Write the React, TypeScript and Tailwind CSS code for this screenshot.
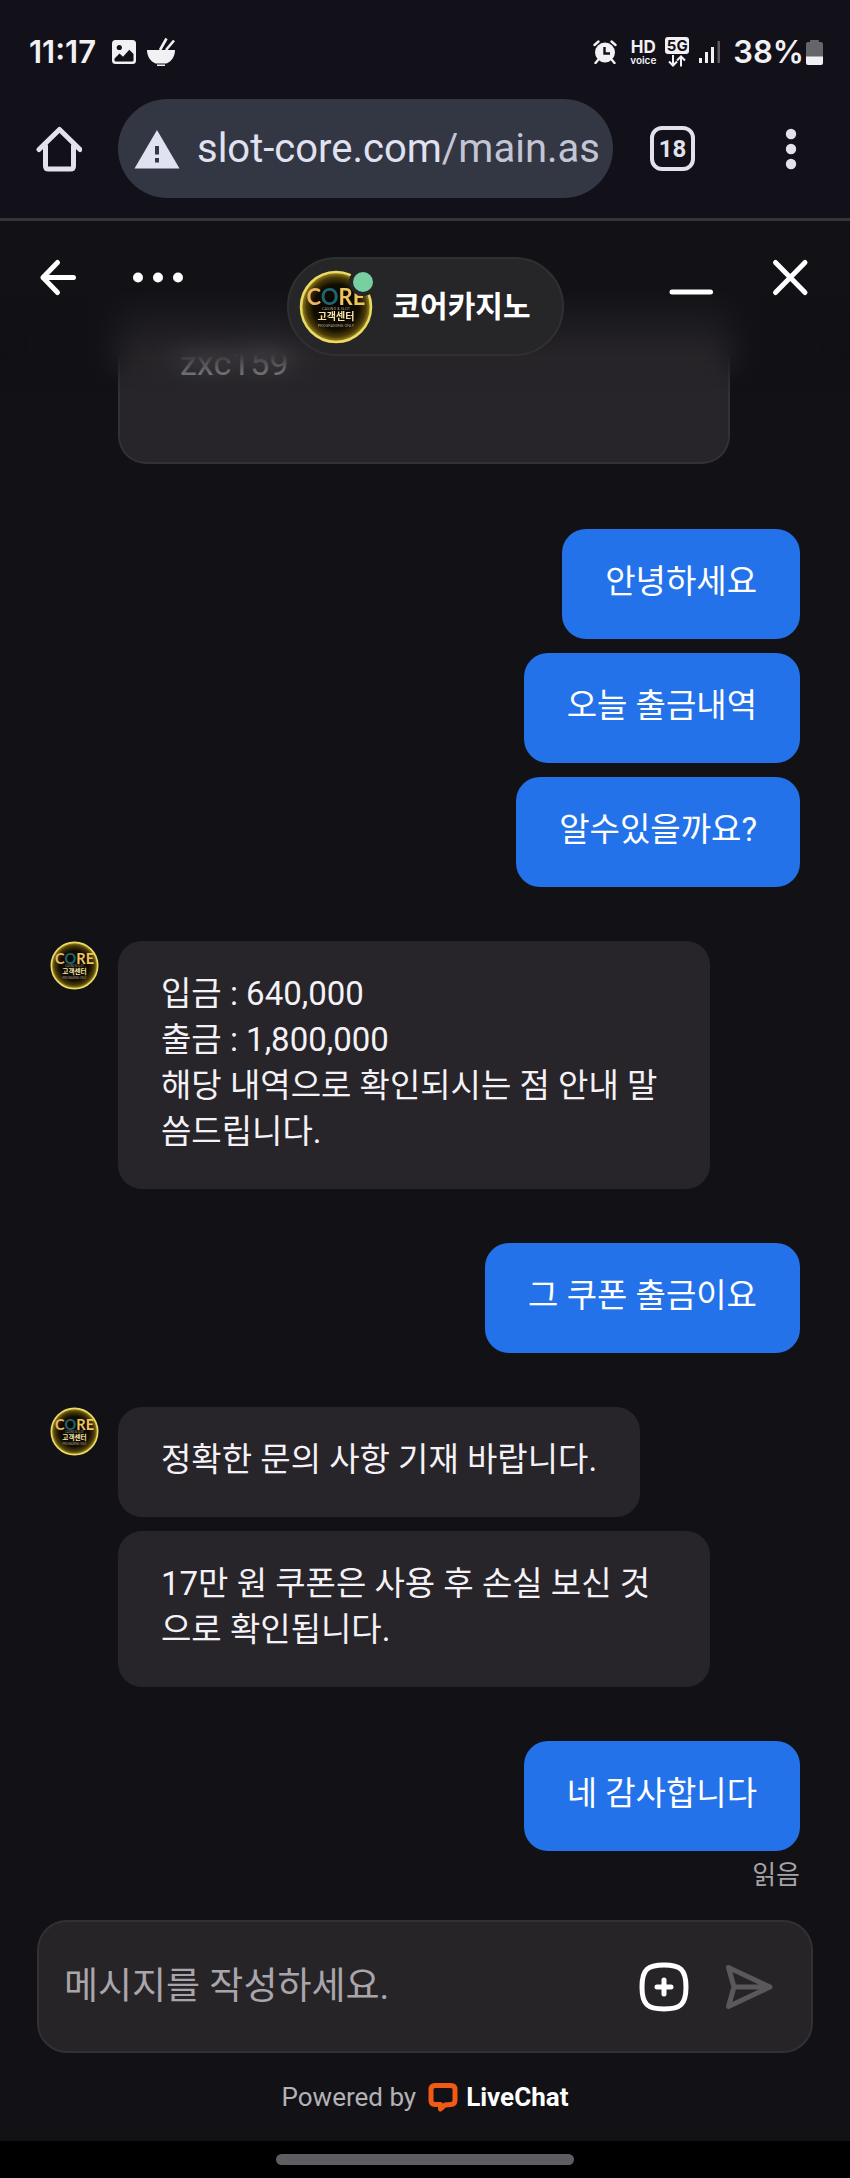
import { ReactNode } from "react";

interface MessageGroup {
  from: "agent" | "me";
  messages: string[];
}

const groups: MessageGroup[] = [
  { from: "me", messages: ["안녕하세요", "오늘 출금내역", "알수있을까요?"] },
  {
    from: "agent",
    messages: [
      "입금 : 640,000\n출금 : 1,800,000\n해당 내역으로 확인되시는 점 안내 말씀드립니다.",
    ],
  },
  { from: "me", messages: ["그 쿠폰 출금이요"] },
  {
    from: "agent",
    messages: [
      "정확한 문의 사항 기재 바랍니다.",
      "17만 원 쿠폰은 사용 후 손실 보신 것으로 확인됩니다.",
    ],
  },
  { from: "me", messages: ["네 감사합니다"] },
];

function Avatar({ className }: { className: string }) {
  return (
    <svg viewBox="0 0 74 74" className={className} role="img" aria-label="CORE 고객센터">
      <defs>
        <radialGradient id="avatar-glow">
          <stop offset="0" stopColor="#070501" />
          <stop offset="0.65" stopColor="#120d02" />
          <stop offset="0.85" stopColor="#4a3c07" />
          <stop offset="1" stopColor="#a8932a" />
        </radialGradient>
      </defs>
      <circle cx="37" cy="37" r="35" fill="url(#avatar-glow)" stroke="#ecdb62" strokeWidth="2.5" />
      <g textAnchor="middle" fontFamily="Roboto, 'Noto Sans CJK KR', sans-serif">
        <text x="37" y="35" fontSize="22" fontWeight="700" fontFamily="Lato, sans-serif" fill="#efb65c">
          C<tspan fill="#1b6672">O</tspan><tspan fill="#efc45c">RE</tspan>
        </text>
        <text x="37" y="40" fontSize="4" fill="#a89a86">
          CASINO &amp; SLOT
        </text>
        <text x="37" y="50" fontSize="10" fontWeight="700" fill="#f5e3a8">
          고객센터
        </text>
        <text x="37" y="57" fontSize="4" fill="#a89a86">
          PROGRAMING ONLY
        </text>
      </g>
    </svg>
  );
}

function StatusBar() {
  return (
    <div className="flex h-9 items-center justify-between pl-[29px] pr-[27px] font-['Inter',sans-serif] text-[31px] font-semibold text-[#f1f0f3]">
      <div className="flex items-center">
        <span>11:17</span>
        <svg viewBox="0 0 24 24" className="ml-4 size-6">
          <rect width="24" height="24" rx="3.5" fill="currentColor" />
          <circle cx="7.3" cy="7.5" r="2.6" fill="#12111a" />
          <path d="M2.5 18.5 7.5 13.5l3.5 3.3 6.3-7 4.2 4.2v6.2q0 1.3-1.3 1.3H3.8q-1.3 0-1.3-1.3z" fill="#12111a" />
        </svg>
        <svg viewBox="0 0 30 30" className="ml-2.5 size-[30px]" fill="currentColor">
          <path d="M1 13h28c0 6.5-3.5 11.5-8.5 13.5h-11C4.5 24.5 1 19.5 1 13z" />
          <path d="M11 27.5h8v1.5h-8z" />
          <path d="M14 13 20.5 1.5M20 13l8-9.5" stroke="currentColor" strokeWidth="2.6" />
        </svg>
      </div>
      <div className="flex items-center">
        <svg viewBox="0 0 24 24" className="size-6">
          <circle cx="12" cy="12.5" r="10" fill="currentColor" />
          <path d="M1.5 5 5.5 1.5M22.5 5l-4-3.5M5 20l-2.5 3M19 20l2.5 3" stroke="currentColor" strokeWidth="2.4" strokeLinecap="round" />
          <path d="M11.5 7v6.5H17" fill="none" stroke="#12111a" strokeWidth="2.4" />
        </svg>
        <div className="ml-3 flex w-7 flex-col items-center">
          <span className="text-[17px] font-bold leading-[15px]">HD</span>
          <span className="text-[10px] leading-[10px]">voice</span>
        </div>
        <div className="ml-2 flex w-6 flex-col items-center">
          <span className="h-[17px] w-6 rounded-[3px] bg-[#f1f0f3] text-center text-[15px] font-bold leading-[17px] text-[#12111a]">
            5G
          </span>
          <svg viewBox="0 0 18 12" className="mt-px h-3 w-[18px]" fill="none" stroke="currentColor" strokeWidth="2">
            <path d="M5 0v10M1 6.5l4 4 4-4M13 11.5V1.5M9 5.5l4-4 4 4" />
          </svg>
        </div>
        <svg viewBox="0 0 22 24" className="ml-2.5 h-6 w-[22px]" fill="currentColor">
          <path d="M0 18h3v5H0zM6 12h3v11H6zM12 7h3v16h-3z" />
          <path d="M18.5 1h2.5v22h-2.5z" fill="#5b5a60" />
        </svg>
        <span className="ml-3">38%</span>
        <svg viewBox="0 0 17 26" className="ml-0.5 h-[26px] w-[17px]">
          <path d="M4 3V1.5Q4 1 5 1h7q1 0 1 .5V3h2q2 0 2 2v13H0V5q0-2 2-2z" fill="#66656b" />
          <path d="M0 17.5h17V24q0 2-2 2H2q-2 0-2-2z" fill="currentColor" />
        </svg>
      </div>
    </div>
  );
}

function BrowserBar() {
  return (
    <div className="flex items-center pb-5 pl-9 pr-12 pt-[29px] text-[#e3e1ec]">
      <button type="button" aria-label="홈">
        <svg viewBox="0 0 46 46" className="size-[46px]" fill="none" stroke="currentColor" strokeWidth="5" strokeLinecap="round" strokeLinejoin="round">
          <path d="M3 23.5 23.5 3.5 44 23.5" />
          <path d="M9.5 20v20q0 3 3 3h22q3 0 3-3V20" />
        </svg>
      </button>
      <div className="ml-9 flex h-[99px] min-w-0 flex-1 items-center rounded-full bg-[#333643] pl-4 pr-3">
        <svg viewBox="0 0 46 40" className="h-10 w-[46px] shrink-0">
          <path d="M23 1 45.5 39.5H.5z" fill="#e0e1f1" />
          <path d="M21 17h4v8.5h-4zM21 29h4v4.5h-4z" fill="#333643" />
        </svg>
        <div className="ml-[17px] flex-1 whitespace-nowrap text-[40px] leading-[52px] text-[#e0e1f1]">
          slot-core.com<span className="text-[#c3c5d4]">/main.as</span>
        </div>
      </div>
      <button
        type="button"
        aria-label="탭 18개"
        className="ml-[37px] size-[45px] rounded-[12px] border-4 border-[#e3e1ec] text-center text-[24px] font-bold leading-[38px]"
      >
        18
      </button>
      <button type="button" aria-label="메뉴" className="ml-[85px]">
        <svg viewBox="0 0 22 46" className="h-[46px] w-[22px]" fill="currentColor">
          <circle cx="11" cy="8" r="5.2" />
          <circle cx="11" cy="23" r="5.2" />
          <circle cx="11" cy="38" r="5.2" />
        </svg>
      </button>
    </div>
  );
}

function IconButton({ label, children }: { label: string; children: ReactNode }) {
  return (
    <button type="button" aria-label={label} className="shrink-0">
      <svg viewBox="0 0 48 40" className="h-10 w-12 overflow-visible" fill="none" stroke="white" strokeWidth="5" strokeLinecap="round" strokeLinejoin="round">
        {children}
      </svg>
    </button>
  );
}

function ChatHeader() {
  return (
    <header className="absolute inset-x-0 top-0 h-[170px]">
      <div className="absolute inset-0 bg-linear-to-b from-[#121115] from-40% to-transparent to-80% backdrop-blur-lg [mask-image:linear-gradient(to_bottom,black_78%,transparent)]" />
      <div className="relative grid grid-cols-[1fr_auto_1fr] items-start px-9 pt-9">
        <div className="flex gap-[52px]">
          <IconButton label="뒤로">
            <path d="M37.5 20.5H7M21.5 5.5 7 20.5l14.5 15" />
          </IconButton>
          <IconButton label="더보기">
            <g fill="white" stroke="none">
              <circle cx="2" cy="20.5" r="5" />
              <circle cx="22" cy="20.5" r="5" />
              <circle cx="42" cy="20.5" r="5" />
            </g>
          </IconButton>
        </div>
        <div className="flex h-[99px] items-center rounded-full border-2 border-[#303033] bg-[#262528] pl-2.5 pr-[31px]">
          <div className="relative">
            <Avatar className="size-[74px]" />
            <span className="absolute -right-1 -top-0.5 size-7 rounded-full border-4 border-[#262528] bg-[#78cf9f]" />
          </div>
          <h1 className="ml-5 text-[30px] font-bold leading-[44px] text-white">코어카지노</h1>
        </div>
        <div className="flex justify-end gap-[52px]">
          <IconButton label="최소화">
            <path d="M6 35h38.5" />
          </IconButton>
          <IconButton label="닫기">
            <path d="M9.5 5.5 39 35.5M39 5.5 9.5 35.5" />
          </IconButton>
        </div>
      </div>
    </header>
  );
}

function Group({ from, messages }: MessageGroup) {
  const mine = from === "me";
  return (
    <div className={mine ? "flex justify-end" : "flex gap-[19px]"}>
      {!mine && <Avatar className="size-[49px] shrink-0" />}
      <div className={mine ? "flex flex-col items-end gap-3.5" : "flex flex-col items-start gap-3.5"}>
        {messages.map((text) => (
          <p
            key={text}
            className={
              mine
                ? "rounded-3xl bg-[#2472ea] px-[43px] pb-[34px] pt-[30px] text-[33px] leading-[46px] text-white"
                : "max-w-[592px] whitespace-pre-line rounded-3xl bg-[#272529] px-[43px] pb-[34px] pt-[30px] text-[33px] leading-[46px] text-[#f4f2f7]"
            }
          >
            {text}
          </p>
        ))}
      </div>
    </div>
  );
}

function Composer() {
  return (
    <form className="mx-[37px] flex h-[133px] items-center rounded-[30px] border-2 border-[#323034] bg-[#272428] pl-[25px] pr-[38px]">
      <input
        type="text"
        aria-label="메시지"
        placeholder="메시지를 작성하세요."
        className="h-16 min-w-0 flex-1 bg-transparent text-[37px] text-white placeholder:text-[#a9a6ab] focus:outline-none"
      />
      <button type="button" aria-label="첨부">
        <svg viewBox="0 0 50 50" className="size-[50px]" fill="none" stroke="white" strokeWidth="5" strokeLinecap="round">
          <path d="M25 3C41 3 47 7 47 25S41 47 25 47 3 43 3 25 9 3 25 3z" />
          <path d="M25 18v14M18 25h14" />
        </svg>
      </button>
      <button type="submit" aria-label="보내기" className="ml-9">
        <svg viewBox="0 0 48 48" className="size-12" fill="none" stroke="#5a585c" strokeWidth="5" strokeLinecap="round" strokeLinejoin="round">
          <path d="M3.5 4.5 45 24 3.5 43.5 9 24zM9 24h35" />
        </svg>
      </button>
    </form>
  );
}

export default function App() {
  return (
    <div className="flex min-h-screen flex-col bg-[#121115] font-['Roboto','Noto_Sans_CJK_KR',sans-serif]">
      <div className="border-b-[3px] border-[#35343a] bg-[#12111a] pt-[34px]">
        <StatusBar />
        <BrowserBar />
      </div>

      <main className="relative flex-1">
        <div className="flex flex-col gap-[54px] overflow-hidden px-[50px]">
          <div className="mb-[11px] ml-[68px] max-w-[612px] rounded-b-[28px] border-2 border-t-0 border-[#323135] bg-[#272529] pb-[76px] pl-[60px] pt-[119px] text-[34px] leading-[46px] text-[#98969b]">
            zxc159
          </div>
          {groups.map((group, i) => (
            <Group key={i} {...group} />
          ))}
        </div>
        <p className="mb-6 mt-1.5 px-[50px] text-right text-[26px] leading-9 text-[#a5a3a8]">읽음</p>
        <ChatHeader />
      </main>

      <Composer />
      <footer className="flex h-[88px] items-center justify-center text-[26px] text-[#b3b1b6]">
        Powered by
        <a href="#" className="ml-3 flex items-center gap-2 font-bold text-white">
          <svg viewBox="0 0 30 30" className="size-[30px]" fill="none" stroke="#f05a14" strokeWidth="5" strokeLinejoin="round">
            <path d="M7 3.5h16q4 0 4 4V18q0 4.5-4 4.5l-6 .5-4.500 4V22.5H7q-4 0-4-4v-11q0-4 4-4z" />
          </svg>
          LiveChat
        </a>
      </footer>
      <div className="flex h-[37px] items-center justify-center bg-black">
        <div className="h-[11px] w-[35%] rounded-full bg-[#5f5d61]" />
      </div>
    </div>
  );
}
